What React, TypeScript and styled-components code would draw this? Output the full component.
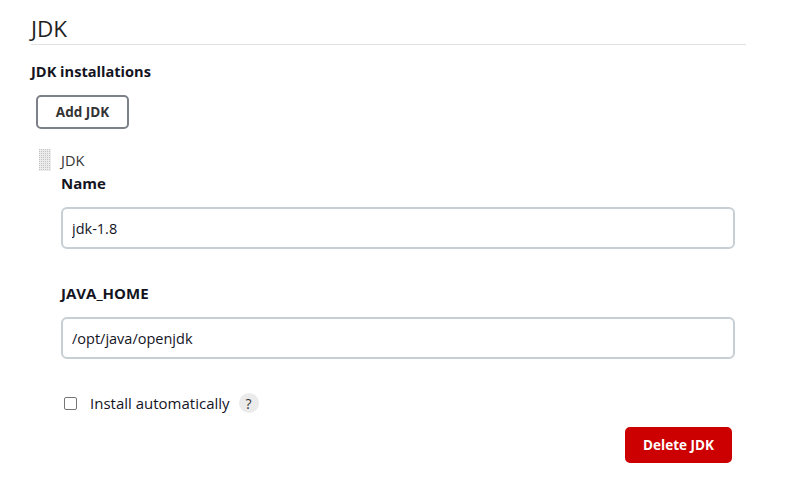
import React from "react";
import styled, { createGlobalStyle } from "styled-components";

const Global = createGlobalStyle`
  html, body { margin: 0; padding: 0; background: #fff; }
  body { font-family: "Open Sans", "Noto Sans", sans-serif; color: #14141f; }
`;

const Page = styled.div`
  padding-left: 31px;
  width: 715px;
`;

const Heading = styled.h1`
  margin: 0;
  padding: 15px 0 1px;
  font-size: 22.5px;
  line-height: 28px;
  font-weight: 400;
  color: #1f1f24;
  border-bottom: 1px solid #e0e0e0;
`;

const SectionTitle = styled.div`
  margin-top: 16px;
  font-size: 14.6px;
  line-height: 20px;
  font-weight: 700;
  color: #14141f;
`;

const Button = styled.button<{ $danger?: boolean }>`
  box-sizing: border-box;
  font-family: inherit;
  font-size: 13.5px;
  font-weight: 700;
  border-radius: 5px;
  cursor: pointer;
  padding: 0;
  border: 2px solid ${(p) => (p.$danger ? "#cc0000" : "#7b8187")};
  background: ${(p) => (p.$danger ? "#cc0000" : "#fff")};
  color: ${(p) => (p.$danger ? "#fff" : "#333")};
`;

const AddButton = styled(Button)`
  margin: 14px 0 0 5px;
  width: 93px;
  height: 34px;
`;

const Item = styled.div`
  margin-top: 20px;
`;

const ItemHeader = styled.div`
  display: flex;
  align-items: flex-start;
  gap: 10px;
  padding-left: 8px;
`;

const HandleSvg = styled.svg`
  display: block;
  flex: none;
`;

function Handle() {
  const dots: React.ReactNode[] = [];
  for (let y = 0; y < 22; y += 2) {
    for (let x = 0; x < 12; x += 2) {
      dots.push(<rect key={`${x}-${y}`} x={x} y={y} width={1} height={1} fill="#c2c2c2" />);
    }
  }
  return (
    <HandleSvg width={12} height={22} viewBox="0 0 12 22">
      <rect width={12} height={22} fill="#ececec" />
      {dots}
    </HandleSvg>
  );
}

const ItemTitle = styled.div`
  padding-top: 2px;
  font-size: 14.5px;
  line-height: 20px;
  font-weight: 400;
  color: #333;
`;

const ItemBody = styled.div`
  padding: 0 11px 0 30px;
`;

const Field = styled.div<{ $first?: boolean }>`
  margin-top: ${(p) => (p.$first ? "2px" : "34px")};
`;

const Label = styled.div`
  font-size: 15px;
  line-height: 20px;
  font-weight: 700;
  color: #14141f;
`;

const Input = styled.input`
  display: block;
  box-sizing: border-box;
  margin-top: 14px;
  width: 100%;
  height: 42px;
  padding: 0 9px;
  border: 2px solid #c7cfd4;
  border-radius: 6px;
  font-family: inherit;
  font-size: 14.5px;
  color: #14141f;
  background: #fff;
  outline: none;
`;

const CheckRow = styled.div`
  margin-top: 34px;
  height: 20px;
  display: flex;
  align-items: center;
`;

const Check = styled.span`
  box-sizing: border-box;
  width: 13px;
  height: 13px;
  margin-left: 3px;
  border: 1px solid #767676;
  border-radius: 2px;
  background: #fff;
`;

const CheckLabel = styled.span`
  margin-left: 13px;
  font-size: 15px;
  line-height: 20px;
  color: #14141f;
`;

const Help = styled.span`
  margin-left: 9px;
  width: 20px;
  height: 20px;
  border-radius: 50%;
  background: #ebebeb;
  color: #333;
  font-size: 14px;
  font-weight: 400;
  display: flex;
  align-items: center;
  justify-content: center;
`;

const Actions = styled.div`
  margin-top: 14px;
  display: flex;
  justify-content: flex-end;
  padding-right: 3px;
`;

const DeleteButton = styled(Button)`
  width: 107px;
  height: 36px;
`;

export default function App() {
  return (
    <Page>
      <Global />
      <Heading>JDK</Heading>
      <SectionTitle>JDK installations</SectionTitle>
      <AddButton>Add JDK</AddButton>
      <Item>
        <ItemHeader>
          <Handle />
          <ItemTitle>JDK</ItemTitle>
        </ItemHeader>
        <ItemBody>
          <Field $first>
            <Label>Name</Label>
            <Input defaultValue="jdk-1.8" />
          </Field>
          <Field>
            <Label>JAVA_HOME</Label>
            <Input defaultValue="/opt/java/openjdk" />
          </Field>
          <CheckRow>
            <Check />
            <CheckLabel>Install automatically</CheckLabel>
            <Help>?</Help>
          </CheckRow>
          <Actions>
            <DeleteButton $danger>Delete JDK</DeleteButton>
          </Actions>
        </ItemBody>
      </Item>
    </Page>
  );
}
